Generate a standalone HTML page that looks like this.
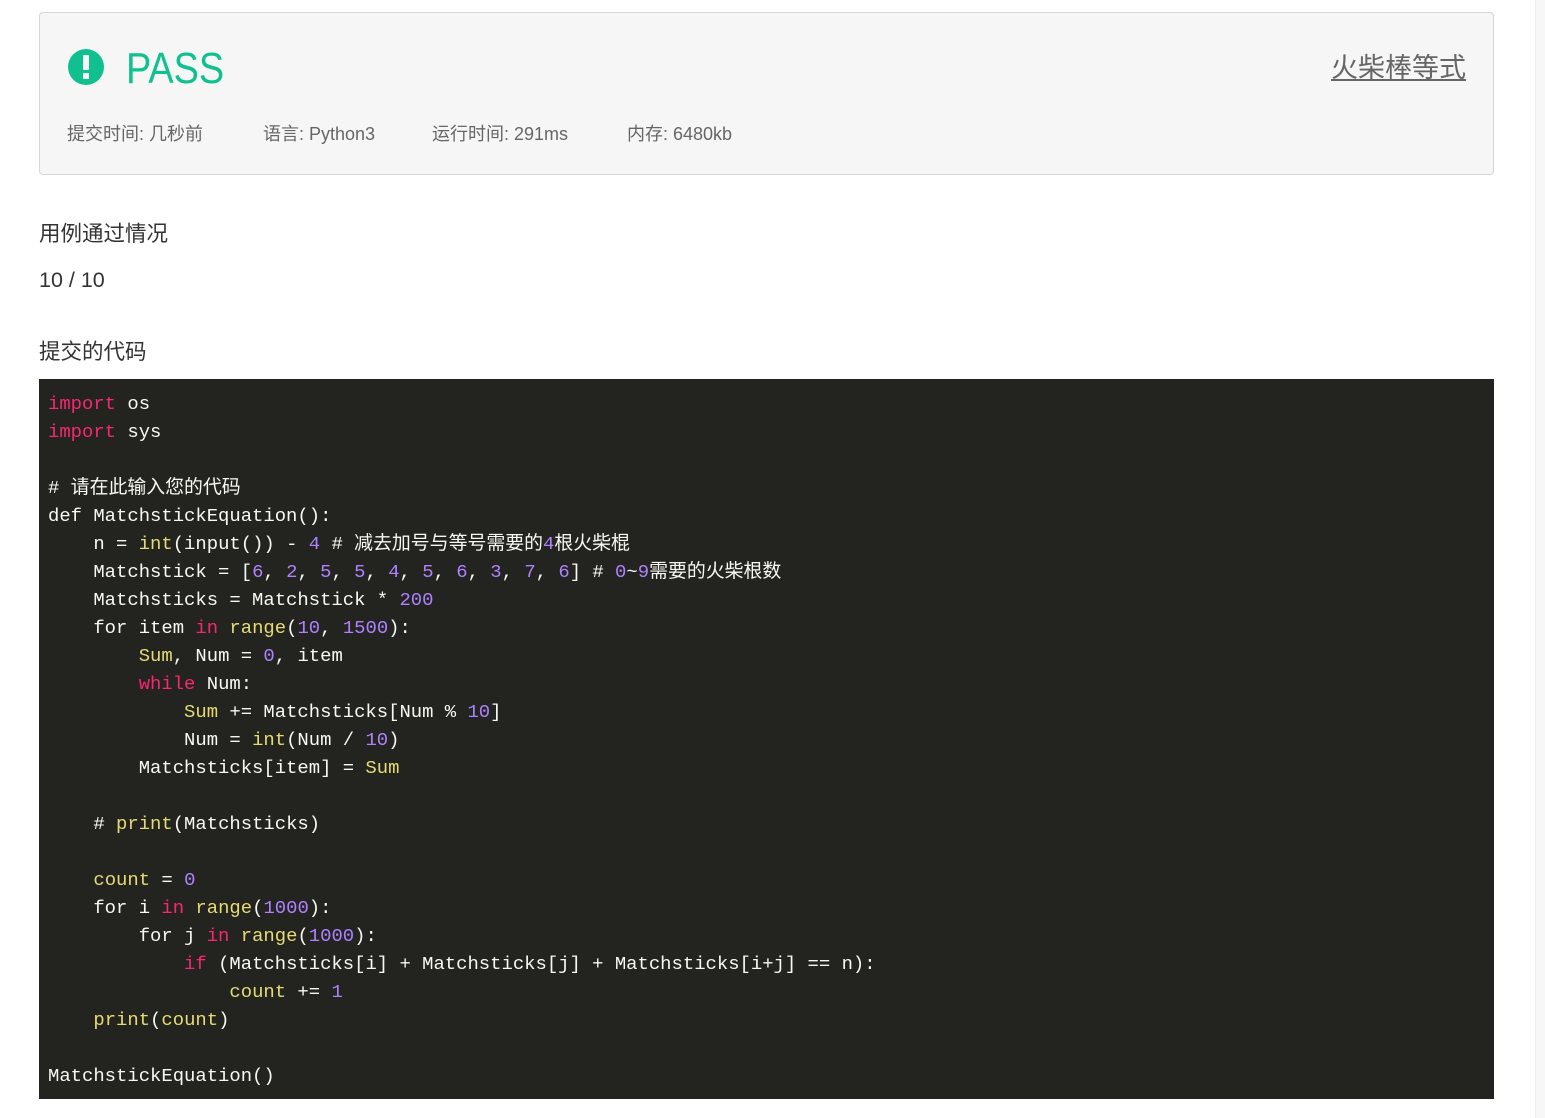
<!DOCTYPE html>
<html><head><meta charset="utf-8"><style>
body{margin:0;background:#fff;width:1545px;height:1118px;overflow:hidden;font-family:"Liberation Sans","Noto Sans CJK SC",sans-serif;position:relative}
.side{position:absolute;left:1535px;top:0;width:10px;height:1118px;background:#f7f7f7;border-left:1px solid #eee}
.hdr{position:absolute;left:39px;top:12px;width:1453px;height:161px;background:#f6f6f6;border:1px solid #d6d6d6;border-radius:4px}
.icon{position:absolute;left:28px;top:36px;width:36px;height:36px;border-radius:50%;background:#10c18f}
.icon:before{content:"";position:absolute;left:15px;top:6px;width:6px;height:15px;background:#f6f6f6;border-radius:1px}
.icon:after{content:"";position:absolute;left:15px;top:24px;width:6px;height:6px;background:#f6f6f6}
.pass{position:absolute;left:86px;top:29px;font-size:44px;color:#10c18f;line-height:54px;transform:scaleX(0.86);transform-origin:left}
.title{position:absolute;right:27px;top:36px;font-size:27px;color:#666;text-decoration:underline;line-height:38px}
.meta{position:absolute;top:109px;font-size:18px;color:#666;line-height:24px}
.h{position:absolute;left:39px;font-size:21.5px;color:#333;line-height:28px}
pre{position:absolute;left:39px;top:379px;width:1446px;height:709px;margin:0;padding:11px 0 0 9px;background:#23241f;color:#f8f8f2;font-family:"Liberation Mono","Noto Sans CJK SC",monospace;font-size:18.9px;line-height:28px;box-sizing:content-box}
.k{color:#f92672}.y{color:#e6db74}.n{color:#ae81ff}
</style></head><body>
<div class="side"></div>
<div class="hdr">
<div class="icon"></div>
<div class="pass">PASS</div>
<div class="title">火柴棒等式</div>
<div class="meta" style="left:27px">提交时间: 几秒前</div>
<div class="meta" style="left:223px">语言: Python3</div>
<div class="meta" style="left:392px">运行时间: 291ms</div>
<div class="meta" style="left:587px">内存: 6480kb</div>
</div>
<div class="h" style="top:220px">用例通过情况</div>
<div class="h" style="top:266px">10 / 10</div>
<div class="h" style="top:338px">提交的代码</div>
<pre><span class="k">import</span> os
<span class="k">import</span> sys

# 请在此输入您的代码
def MatchstickEquation():
    n = <span class="y">int</span>(input()) - <span class="n">4</span> # 减去加号与等号需要的<span class="n">4</span>根火柴棍
    Matchstick = [<span class="n">6</span>, <span class="n">2</span>, <span class="n">5</span>, <span class="n">5</span>, <span class="n">4</span>, <span class="n">5</span>, <span class="n">6</span>, <span class="n">3</span>, <span class="n">7</span>, <span class="n">6</span>] # <span class="n">0</span>~<span class="n">9</span>需要的火柴根数
    Matchsticks = Matchstick * <span class="n">200</span>
    for item <span class="k">in</span> <span class="y">range</span>(<span class="n">10</span>, <span class="n">1500</span>):
        <span class="y">Sum</span>, Num = <span class="n">0</span>, item
        <span class="k">while</span> Num:
            <span class="y">Sum</span> += Matchsticks[Num % <span class="n">10</span>]
            Num = <span class="y">int</span>(Num / <span class="n">10</span>)
        Matchsticks[item] = <span class="y">Sum</span>

    # <span class="y">print</span>(Matchsticks)

    <span class="y">count</span> = <span class="n">0</span>
    for i <span class="k">in</span> <span class="y">range</span>(<span class="n">1000</span>):
        for j <span class="k">in</span> <span class="y">range</span>(<span class="n">1000</span>):
            <span class="k">if</span> (Matchsticks[i] + Matchsticks[j] + Matchsticks[i+j] == n):
                <span class="y">count</span> += <span class="n">1</span>
    <span class="y">print</span>(<span class="y">count</span>)

MatchstickEquation()</pre>
</body></html>
